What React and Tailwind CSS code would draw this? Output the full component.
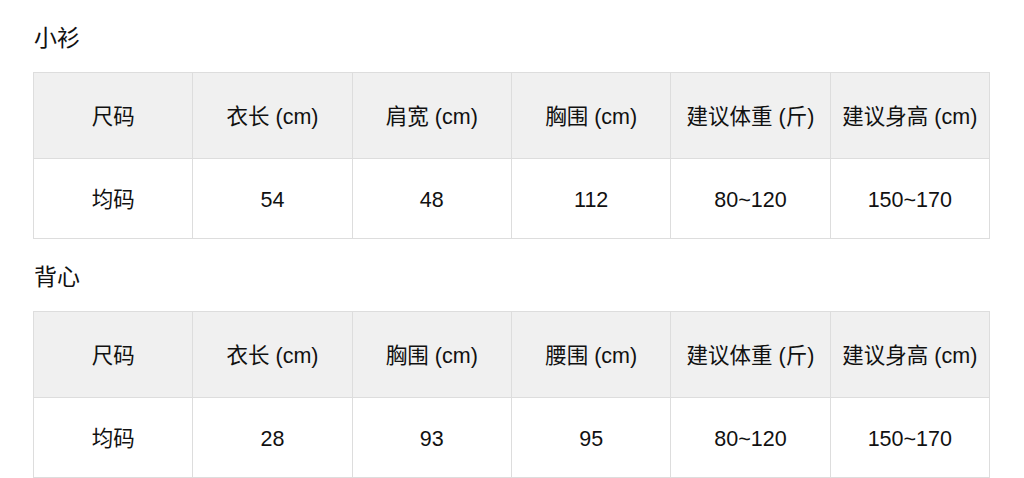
export default function App() {
  const font = { fontFamily: '"Liberation Sans", "Noto Sans CJK SC", sans-serif' };
  const tables = [
    {
      title: "小衫",
      head: ["尺码", "衣长 (cm)", "肩宽 (cm)", "胸围 (cm)", "建议体重 (斤)", "建议身高 (cm)"],
      row: ["均码", "54", "48", "112", "80~120", "150~170"],
    },
    {
      title: "背心",
      head: ["尺码", "衣长 (cm)", "胸围 (cm)", "腰围 (cm)", "建议体重 (斤)", "建议身高 (cm)"],
      row: ["均码", "28", "93", "95", "80~120", "150~170"],
    },
  ];
  return (
    <div className="w-[1024px] h-[478px] bg-white px-[33px] overflow-hidden text-[#111111]" style={font}>
      {tables.map((t) => (
        <div key={t.title}>
          <div className="pt-[23px] pb-[19px] pl-[1px] text-[23px] leading-[30px]">{t.title}</div>
          <div className="w-[957px] border-l border-t border-[#dddddd] grid grid-cols-6">
            {t.head.map((h, i) => (
              <div
                key={"h" + i}
                className="h-[86px] pt-[3px] bg-[#f0f0f0] border-r border-b border-[#dddddd] flex items-center justify-center text-[21.5px] whitespace-nowrap"
              >
                {h}
              </div>
            ))}
            {t.row.map((c, i) => (
              <div
                key={"r" + i}
                className="h-[80px] pt-[3px] bg-white border-r border-b border-[#dddddd] flex items-center justify-center text-[21.5px] whitespace-nowrap"
              >
                {c}
              </div>
            ))}
          </div>
        </div>
      ))}
    </div>
  );
}
